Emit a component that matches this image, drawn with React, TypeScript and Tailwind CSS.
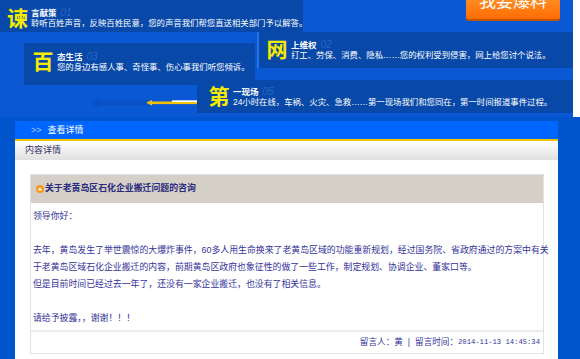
import type { ReactNode } from 'react';

type SloganProps = {
  char: string;
  title: string;
  num: string;
  desc: string;
  className: string;
};

function Slogan({ char, title, num, desc, className }: SloganProps) {
  return (
    <div className={`flex bg-[#0748a8] ${className}`}>
      <span className="w-[22px] text-center text-[21px] font-bold leading-[22px] text-[#f7ec00]">{char}</span>
      <div className="ml-[3px] flex flex-col">
        <div className="flex items-center leading-[10px]">
          <span className="text-[8.5px] font-bold text-white">{title}</span>
          <span className="ml-[4px] text-[10px] italic text-[#2a64c6]">{num}</span>
        </div>
        <div className="whitespace-nowrap text-[8.4px] leading-[10px] text-white">{desc}</div>
      </div>
    </div>
  );
}

function Line({ children }: { children?: ReactNode }) {
  return <div className="h-[17px] whitespace-nowrap leading-[17px]">{children}</div>;
}

export default function App() {
  return (
    <div className="h-[359px] w-[580px] overflow-hidden bg-[#0055cc] font-['Liberation_Sans','Noto_Sans_CJK_SC',sans-serif]">
      <div className="flex">
        <div className="h-[117px] w-[573px] overflow-hidden bg-[#0a58d4]">
          <div className="flex h-[32px]">
            <Slogan
              char="谏"
              title="言献策"
              num="01"
              desc="聆听百姓声音，反映百姓民意，您的声音我们帮您直送相关部门予以解答。"
              className="h-[32px] w-[303px] items-start pl-[7px] pt-[8px]"
            />
            <button className="ml-[163px] -mt-[10px] flex h-[31px] w-[94px] items-start justify-center rounded-b-[3px] border-b-2 border-[#c45400] bg-linear-to-b from-[#ff9a2a] to-[#ff6c00] pt-[3px] text-[17px] leading-[17px] text-white">
              我要爆料
            </button>
          </div>

          <div className="flex h-[36px] items-start">
            <Slogan
              char="百"
              title="态生活"
              num="03"
              desc="您的身边有感人事、奇怪事、伤心事我们听您倾诉。"
              className="ml-[24px] mt-[11px] h-[42px] w-[231px] items-center pb-[4px] pl-[8px]"
            />
            <Slogan
              char="网"
              title="上维权"
              num="02"
              desc="打工、劳保、消费、隐私……您的权利受到侵害，网上给您讨个说法。"
              className="ml-[2px] h-[36px] w-[316px] items-center border-l-2 border-[#2674e6] pl-[7px]"
            />
          </div>

          <div className="flex h-[45px] items-start">
            <svg className="ml-[90px] mt-[12px]" width="107" height="33" viewBox="0 0 107 33">
              <polygon points="0,22.5 9,16.5 9,19.5 57,19.5 57,25.5 9,25.5 9,28.5" fill="#0a50c6" />
              <polygon points="56,22.8 62,20 62,25.5" fill="#f5c000" />
              <rect x="61" y="21.5" width="46" height="2.6" fill="#f5c000" />
              <rect x="82" y="20.3" width="25" height="1.8" fill="#ffffff" />
            </svg>
            <Slogan
              char="第"
              title="一现场"
              num="05"
              desc="24小时在线，车祸、火灾、急救……第一现场我们和您同在，第一时间报道事件过程。"
              className="mt-[12px] h-[33px] w-[376px] items-center pl-[11px]"
            />
          </div>
        </div>
        <div className="h-[117px] flex-1 bg-white" />
      </div>

      <div className="pl-[15px] pt-[4px]">
        <div className="w-[543px] bg-white">
          <div className="flex h-[18px] items-center bg-[#0066ff] pl-[16px] text-[9px] leading-[18px] text-white">
            <span className="mr-[6px] text-[#a8c8ff]">&gt;&gt;</span>
            查看详情
          </div>
          <div className="h-[2px] bg-[#f2c200]" />
          <div className="flex h-[19px] items-center bg-linear-to-b from-white to-[#e0e0e0] pl-[10px] text-[9px] text-[#333366]">
            内容详情
          </div>

          <div className="pb-[10px] pl-[15px] pr-[14px] pt-[14px]">
            <div className="border border-[#e2e2e2]">
              <div className="flex h-[28px] items-center bg-[#d4d0c8] pl-[5px]">
                <span className="mr-[1px] flex h-[8px] w-[8px] items-center justify-center rounded-full bg-[#f39a1e] text-[7px] font-bold leading-none text-white">
                  +
                </span>
                <span className="text-[8.9px] font-bold text-[#2a2a7e]">关于老黄岛区石化企业搬迁问题的咨询</span>
              </div>
              <div className="pb-[3px] pl-[2px] pt-[5px] text-[8.9px] text-[#333399]">
                <Line>领导你好：</Line>
                <Line />
                <Line>
                  去年，黄岛发生了举世震惊的大爆炸事件，60多人用生命换来了老黄岛区域的功能重新规划，经过国务院、省政府通过的方案中有关
                </Line>
                <Line>于老黄岛区域石化企业搬迁的内容，前期黄岛区政府也象征性的做了一些工作，制定规划、协调企业、董家口等。</Line>
                <Line>但是目前时间已经过去一年了，还没有一家企业搬迁，也没有了相关信息。</Line>
                <Line />
                <Line>请给予披露，，谢谢！！！</Line>
              </div>
              <div className="flex h-[23px] items-center justify-end border-t-2 border-[#ececec] pr-[3px] text-[8.6px] text-[#333399]">
                <span>留言人：黄</span>
                <span className="mx-[5px]">|</span>
                <span>留言时间：</span>
                <span className="font-['Liberation_Mono',monospace] text-[7.2px]">2014-11-13 14:45:34</span>
              </div>
            </div>
          </div>
        </div>
      </div>
    </div>
  );
}
